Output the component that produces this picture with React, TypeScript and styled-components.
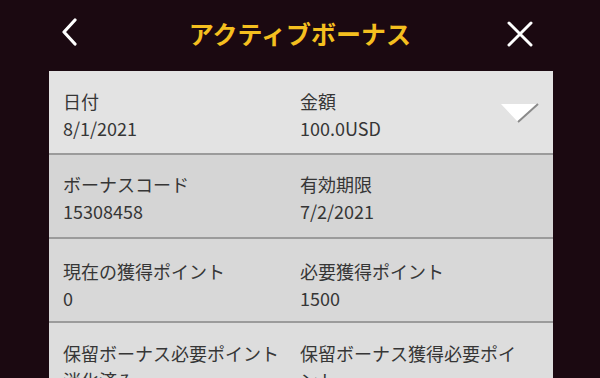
import React from "react";
import styled, { createGlobalStyle } from "styled-components";

const Global = createGlobalStyle`
  html, body { margin: 0; padding: 0; background: #1b0911; }
  body { font-family: "Noto Sans CJK JP", "Noto Sans", sans-serif; }
`;

const Screen = styled.div`
  width: 600px;
  height: 378px;
  overflow: hidden;
  background: #1b0911;
  display: flex;
  flex-direction: column;
`;

const Header = styled.header`
  height: 71px;
  flex-shrink: 0;
  display: grid;
  grid-template-columns: 1fr auto 1fr;
  align-items: center;
  padding: 0 67px 5px 61px;
  box-sizing: border-box;
`;

const IconButton = styled.button<{ $end?: boolean }>`
  background: none;
  border: none;
  padding: 0;
  display: flex;
  align-items: center;
  justify-content: center;
  justify-self: ${(p) => (p.$end ? "end" : "start")};
  margin-top: ${(p) => (p.$end ? "1px" : "-3px")};
  cursor: pointer;
`;

const Title = styled.h1`
  margin: 0 0 0 6px;
  text-align: center;
  color: #f4bf1f;
  font-size: 25px;
  font-weight: 700;
  line-height: 1;
`;

const Panel = styled.section`
  margin-left: 49px;
  width: 504px;
  flex-shrink: 0;
  display: flex;
  flex-direction: column;
`;

const Row = styled.div<{ $bg: string; $pt?: number }>`
  background: ${(p) => p.$bg};
  height: 84px;
  flex-shrink: 0;
  box-sizing: border-box;
  padding: ${(p) => p.$pt ?? 15}px 28px 0 14px;
  display: grid;
  grid-template-columns: 231px 231px;
  column-gap: 6px;
  align-content: start;
  position: relative;
  border-bottom: 2px solid #9b9b9b;
  &:last-child { border-bottom: none; }
`;

const Field = styled.div`
  display: flex;
  flex-direction: column;
  color: #363636;
  font-size: 18px;
  line-height: 27px;
`;

const Label = styled.span``;
const Value = styled.span``;

const Caret = styled.svg`
  position: absolute;
  right: 13px;
  top: 32px;
`;

const rows = [
  { bg: "#e3e3e3", pt: 17, items: [["日付", "8/1/2021"], ["金額", "100.0USD"]], caret: true },
  { bg: "#d5d5d5", pt: 16, items: [["ボーナスコード", "15308458"], ["有効期限", "7/2/2021"]] },
  { bg: "#d8d8d8", pt: 19, items: [["現在の獲得ポイント", "0"], ["必要獲得ポイント", "1500"]] },
  { bg: "#dddddd", pt: 17, items: [["保留ボーナス必要ポイント消化済み", ""], ["保留ボーナス獲得必要ポイント", ""]] },
];

export default function App() {
  return (
    <>
      <Global />
      <Screen>
        <Header>
          <IconButton aria-label="戻る">
            <svg width="16" height="28" viewBox="0 0 16 28">
              <path d="M14 2 L3 14 L14 26" fill="none" stroke="#ffffff" strokeWidth="3.2" strokeLinecap="round" strokeLinejoin="round" />
            </svg>
          </IconButton>
          <Title>アクティブボーナス</Title>
          <IconButton $end aria-label="閉じる">
            <svg width="26" height="26" viewBox="0 0 26 26">
              <path d="M2 2 L24 24 M24 2 L2 24" fill="none" stroke="#ffffff" strokeWidth="3" strokeLinecap="round" />
            </svg>
          </IconButton>
        </Header>
        <Panel>
          {rows.map((r, i) => (
            <Row key={i} $bg={r.bg} $pt={r.pt}>
              {r.items.map(([l, v]) => (
                <Field key={l}>
                  <Label>{l}</Label>
                  {v && <Value>{v}</Value>}
                </Field>
              ))}
              {r.caret && (
                <Caret width="40" height="20" viewBox="0 0 40 20">
                  <polygon points="1,1 38,1 18,19" fill="#ffffff" />
                  <path d="M38 1 L18 19" stroke="#8a8a8a" strokeWidth="2" />
                </Caret>
              )}
            </Row>
          ))}
        </Panel>
      </Screen>
    </>
  );
}
